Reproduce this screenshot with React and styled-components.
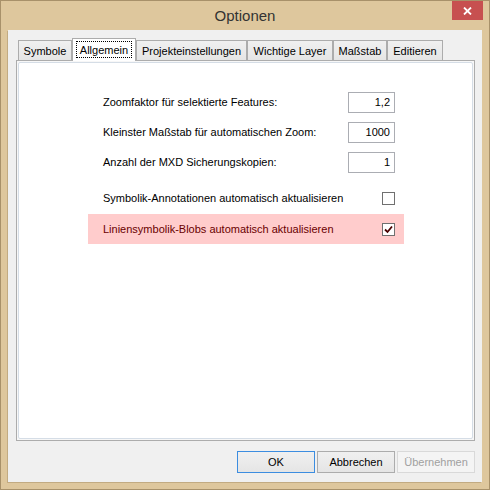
import React from 'react';
import styled, { createGlobalStyle } from 'styled-components';

const GlobalStyle = createGlobalStyle`
  html, body {
    margin: 0;
    padding: 0;
    background: #dcc59b;
  }
  * {
    box-sizing: border-box;
  }
`;

const Window = styled.div`
  width: 490px;
  height: 490px;
  border: 1px solid #a8916a;
  background: #dec79d;
  display: flex;
  flex-direction: column;
  font-family: "Liberation Sans", Arial, sans-serif;
`;

const TitleBar = styled.div`
  height: 30px;
  display: grid;
  grid-template-columns: 1fr auto 1fr;
  align-items: center;
`;

const Title = styled.div`
  grid-column: 2;
  font-size: 15px;
  color: #333;
  padding-bottom: 1px;
`;

const CloseButton = styled.div`
  grid-column: 3;
  justify-self: end;
  align-self: start;
  width: 31px;
  height: 19px;
  margin-right: 6px;
  background: #c75050;
  display: flex;
  align-items: center;
  justify-content: center;
`;

const Client = styled.div`
  flex: 1;
  margin: 0 7px 7px 7px;
  background: #f0f0f0;
  box-shadow: -1px 1px 0 #c2ab82;
  padding: 8px 7px 9px 8px;
  display: flex;
  flex-direction: column;
`;

const TabRow = styled.div`
  display: flex;
  align-items: flex-end;
  height: 23px;
  padding-left: 2px;
  margin-bottom: -1px;
`;

const Tab = styled.div`
  position: relative;
  width: ${p => p.$w}px;
  height: ${p => (p.$active ? 23 : 21)}px;
  border: 1px solid #acacac;
  border-bottom: ${p => (p.$active ? 'none' : '1px solid #acacac')};
  background: ${p => (p.$active ? '#ffffff' : 'linear-gradient(#f0f0f0, #e5e5e5)')};
  z-index: ${p => (p.$active ? 1 : 0)};
  font-size: 11px;
  color: #000;
  display: flex;
  align-items: center;
  justify-content: center;
  padding-bottom: ${p => (p.$active ? 2 : 0)}px;
`;

const FocusLabel = styled.span`
  border: 1px dotted #000;
  padding: 2px 3px 1px;
`;

const Panel = styled.div`
  height: 381px;
  border: 1px solid #acacac;
  background: #f7f7f7;
  padding: 1px;
  display: flex;
`;

const Page = styled.div`
  flex: 1;
  background: #fff;
  border: 1px solid #d5dde6;
  border-radius: 2px;
  padding: 24px 0 0 69px;
`;

const Form = styled.div`
  width: 316px;
  display: flex;
  flex-direction: column;
`;

const Row = styled.div`
  height: 30px;
  display: flex;
  align-items: center;
  justify-content: space-between;
  padding: 0 9px 0 15px;
  font-size: 11px;
  color: ${p => (p.$hot ? '#6a0000' : '#000')};
  background: ${p => (p.$hot ? '#ffcccc' : 'transparent')};
  margin-top: ${p => p.$gap || 0}px;
`;

const NumberBox = styled.div`
  width: 47px;
  height: 21px;
  border: 1px solid #abadb3;
  background: #fff;
  text-align: right;
  padding: 3px 4px 0 0;
  font-size: 11px;
  color: #000;
`;

const CheckBox = styled.div`
  width: 13px;
  height: 13px;
  border: 1px solid #707070;
  background: #fff;
  display: flex;
  align-items: center;
  justify-content: center;
`;

const ButtonRow = styled.div`
  margin-top: 10px;
  display: flex;
  justify-content: flex-end;
  gap: 2px;
`;

const Button = styled.div`
  width: 78px;
  height: 22px;
  border: 1px solid ${p => (p.$default ? '#3c8de0' : p.$disabled ? '#d9d9d9' : '#acacac')};
  background: ${p => (p.$disabled ? '#f4f4f4' : 'linear-gradient(#f0f0f0, #e5e5e5)')};
  color: ${p => (p.$disabled ? '#a0a0a0' : '#000')};
  font-size: 11px;
  display: flex;
  align-items: center;
  justify-content: center;
`;

const tabs = [
  { label: 'Symbole', w: 54 },
  { label: 'Allgemein', w: 64, active: true },
  { label: 'Projekteinstellungen', w: 111 },
  { label: 'Wichtige Layer', w: 86 },
  { label: 'Maßstab', w: 54 },
  { label: 'Editieren', w: 56 },
];

const fields = [
  { label: 'Zoomfaktor für selektierte Features:', value: '1,2' },
  { label: 'Kleinster Maßstab für automatischen Zoom:', value: '1000' },
  { label: 'Anzahl der MXD Sicherungskopien:', value: '1' },
];

function Check() {
  return (
    <svg width="9" height="9" viewBox="0 0 9 9">
      <path d="M1 4.5 L3.5 7 L8 1.5" fill="none" stroke="#4a0000" strokeWidth="1.8" />
    </svg>
  );
}

export default function App() {
  return (
    <>
      <GlobalStyle />
      <Window>
        <TitleBar>
          <Title>Optionen</Title>
          <CloseButton>
            <svg width="9" height="8" viewBox="0 0 9 8">
              <path d="M1 0.5 L8 7.5 M8 0.5 L1 7.5" stroke="#fff" strokeWidth="1.8" />
            </svg>
          </CloseButton>
        </TitleBar>
        <Client>
          <TabRow>
            {tabs.map(t => (
              <Tab key={t.label} $w={t.w} $active={t.active}>
                {t.active ? <FocusLabel>{t.label}</FocusLabel> : t.label}
              </Tab>
            ))}
          </TabRow>
          <Panel>
            <Page>
              <Form>
                {fields.map(f => (
                  <Row key={f.label}>
                    <span>{f.label}</span>
                    <NumberBox>{f.value}</NumberBox>
                  </Row>
                ))}
                <Row $gap={6}>
                  <span>Symbolik-Annotationen automatisch aktualisieren</span>
                  <CheckBox />
                </Row>
                <Row $gap={1} $hot>
                  <span>Liniensymbolik-Blobs automatisch aktualisieren</span>
                  <CheckBox>
                    <Check />
                  </CheckBox>
                </Row>
              </Form>
            </Page>
          </Panel>
          <ButtonRow>
            <Button $default>OK</Button>
            <Button>Abbrechen</Button>
            <Button $disabled>Übernehmen</Button>
          </ButtonRow>
        </Client>
      </Window>
    </>
  );
}
